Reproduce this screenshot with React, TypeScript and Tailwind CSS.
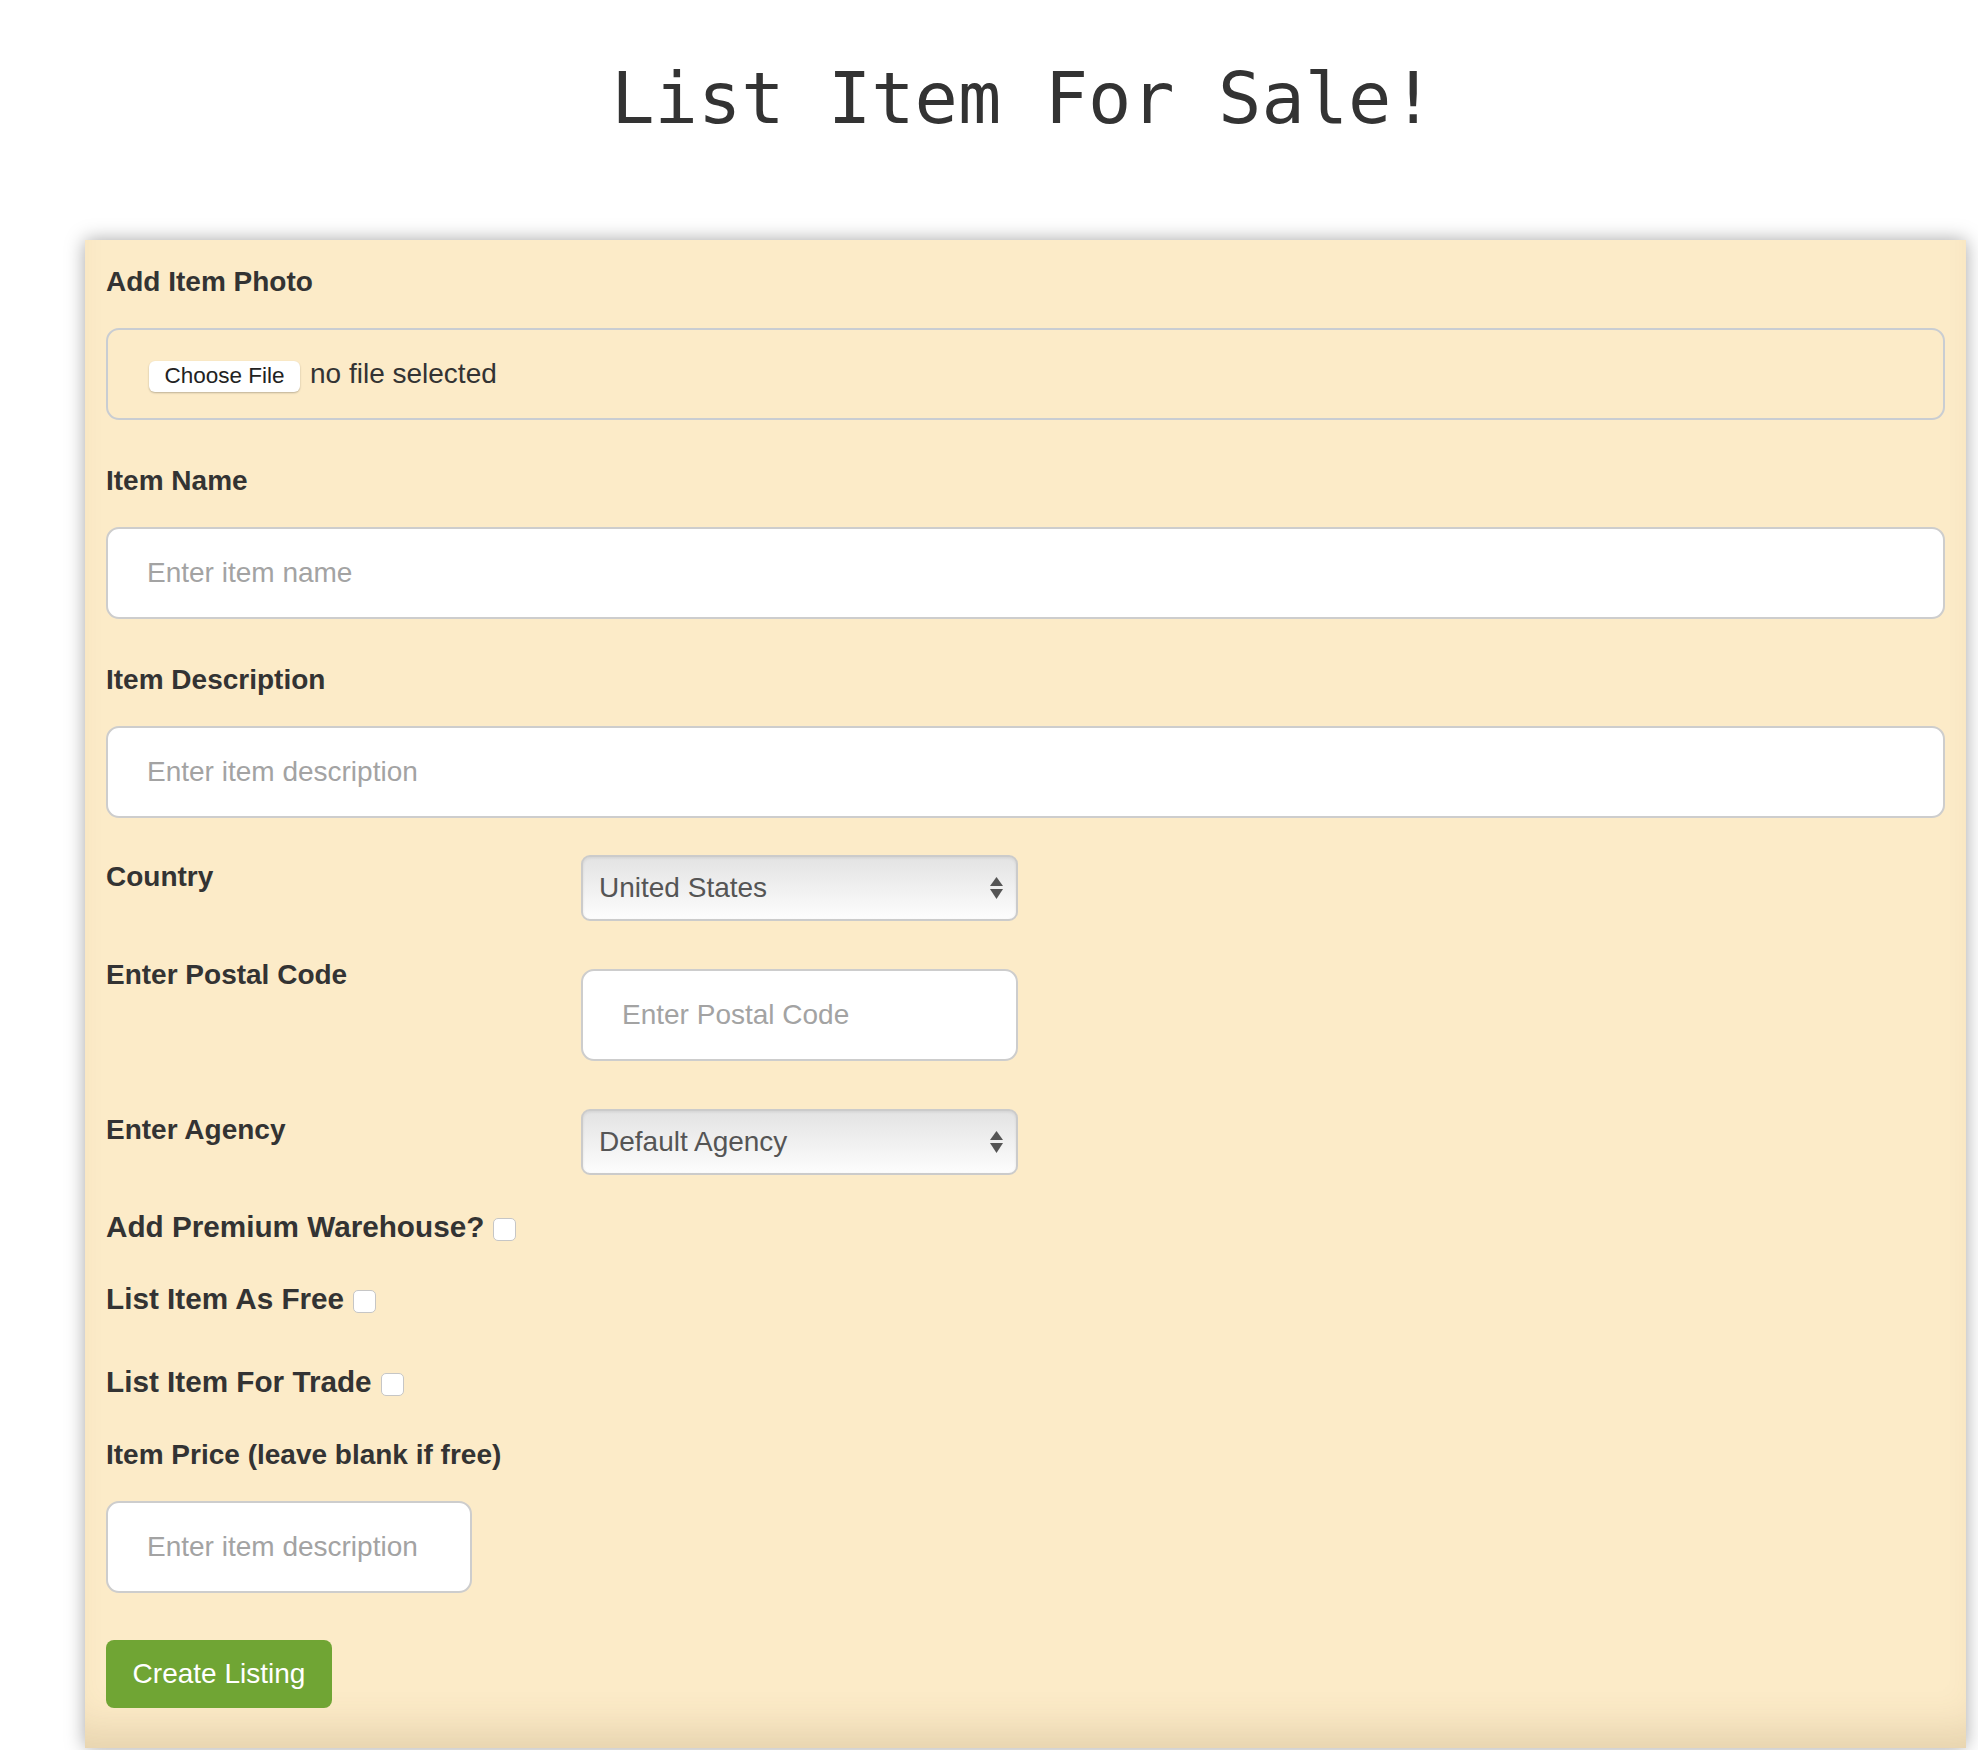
import React from "react";

const labelCls =
  "block font-['Liberation_Sans',Arial,sans-serif] font-bold text-[28px] leading-[40px] text-[#333333]";
const inputCls =
  "block w-full h-[92px] bg-white border-2 border-[#cdcdcd] rounded-[13px] px-[39px] font-['Liberation_Sans',Arial,sans-serif] text-[28px] text-[#333] placeholder:text-[#a3a3a3] outline-none";

function SelectBox({ value }: { value: string }) {
  return (
    <div className="flex items-center justify-between w-[437px] h-[66px] border-2 border-[#cbcbcb] rounded-[9px] bg-linear-to-b from-[#e3e3e3] to-[#fdfdfd] shadow-[inset_0_1px_3px_rgba(0,0,0,0.08)] pl-[16px] pr-[13px]">
      <span className="font-['Liberation_Sans',Arial,sans-serif] text-[28px] text-[#555555]">
        {value}
      </span>
      <svg width="13" height="22" viewBox="0 0 13 22">
        <path d="M6.5 0 L13 9 L0 9 Z" fill="#555" />
        <path d="M0 12 L13 12 L6.5 22 Z" fill="#555" />
      </svg>
    </div>
  );
}

function CheckRow({ label, className = "" }: { label: string; className?: string }) {
  return (
    <div className={"flex items-start " + className}>
      <span className="block font-['Liberation_Sans',Arial,sans-serif] font-bold text-[29.7px] leading-[40px] text-[#333333]">
        {label}
      </span>
      <input
        type="checkbox"
        className="appearance-none block shrink-0 w-[23px] h-[23px] bg-white border-[1.5px] border-[#c6c6c6] rounded-[5px] ml-[9px] mt-[11px]"
      />
    </div>
  );
}

export default function App() {
  return (
    <div className="w-full min-h-screen bg-white">
      <h1 className="pt-[62px] pl-[68px] text-center font-['DejaVu_Sans_Mono',Menlo,monospace] text-[72px] leading-[72px] font-normal text-[#333333]">
        List Item For Sale!
      </h1>

      <div className="mt-[106px] ml-[85px] w-[1881px] px-[21px] pt-[22px] pb-[40px] bg-[#fcebc8] shadow-[0_0_18px_rgba(0,0,0,0.35),inset_0_-40px_40px_-22px_rgba(110,80,30,0.16)]">
        {/* Photo */}
        <label className={labelCls}>Add Item Photo</label>
        <div className="mt-[26px] h-[92px] border-2 border-[#c9cdd2] rounded-[13px] flex items-center pl-[41px]">
          <span className="inline-flex items-center justify-center w-[151px] h-[31px] bg-white rounded-[6px] shadow-[0_1px_2px_rgba(0,0,0,0.25)] font-['Liberation_Sans',Arial,sans-serif] text-[22.5px] text-[#222] mt-[4px]">
            Choose File
          </span>
          <span className="ml-[10px] font-['Liberation_Sans',Arial,sans-serif] text-[28px] text-[#333]">
            no file selected
          </span>
        </div>

        {/* Name */}
        <label className={labelCls + " mt-[41px]"}>Item Name</label>
        <input className={inputCls + " mt-[26px]"} placeholder="Enter item name" />

        {/* Description */}
        <label className={labelCls + " mt-[41px]"}>Item Description</label>
        <input className={inputCls + " mt-[26px]"} placeholder="Enter item description" />

        {/* Country */}
        <div className="flex items-start mt-[37px]">
          <span className={labelCls + " w-[475px] pt-[2px]"}>Country</span>
          <SelectBox value="United States" />
        </div>

        {/* Postal */}
        <div className="flex items-start mt-[34px]">
          <span className={labelCls + " w-[475px]"}>Enter Postal Code</span>
          <input
            className="block mt-[14px] w-[437px] h-[92px] bg-white border-2 border-[#cdcdcd] rounded-[13px] px-[39px] font-['Liberation_Sans',Arial,sans-serif] text-[28px] text-[#333] placeholder:text-[#a3a3a3] outline-none"
            placeholder="Enter Postal Code"
          />
        </div>

        {/* Agency */}
        <div className="flex items-start mt-[48px]">
          <span className={labelCls + " w-[475px] pt-[1px]"}>Enter Agency</span>
          <SelectBox value="Default Agency" />
        </div>

        <CheckRow label="Add Premium Warehouse?" className="mt-[32px]" />
        <CheckRow label="List Item As Free" className="mt-[32px]" />
        <CheckRow label="List Item For Trade" className="mt-[43px]" />

        {/* Price */}
        <label className={labelCls + " mt-[33px]"}>Item Price (leave blank if free)</label>
        <input
          className="block mt-[26px] w-[366px] h-[92px] bg-white border-2 border-[#cdcdcd] rounded-[13px] px-[39px] font-['Liberation_Sans',Arial,sans-serif] text-[28px] text-[#333] placeholder:text-[#a3a3a3] outline-none"
          placeholder="Enter item description"
        />

        <button className="block mt-[47px] w-[226px] h-[68px] rounded-[8px] bg-[#70a534] text-white font-['Liberation_Sans',Arial,sans-serif] text-[28px]">
          Create Listing
        </button>
      </div>
    </div>
  );
}
